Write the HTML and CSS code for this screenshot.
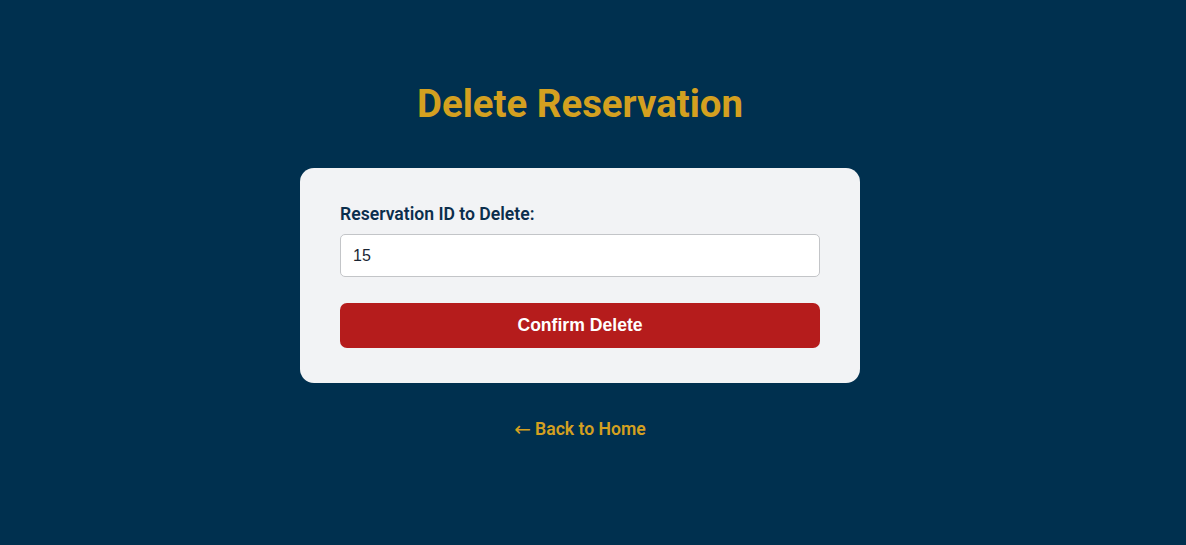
FILE: index.html
```html
<!DOCTYPE html>
<html lang="en">
<head>
<meta charset="utf-8">
<title>Delete Reservation</title>
<link rel="stylesheet" href="styles.css">
</head>
<body>
<main class="page">
  <h1 class="title">Delete Reservation</h1>
  <form class="card">
    <label class="label" for="rid">Reservation ID to Delete:</label>
    <input class="input" id="rid" type="text" value="15">
    <button class="btn" type="button">Confirm Delete</button>
  </form>
  <a class="back" href="#"><span class="arrow">←</span>Back to Home</a>
</main>
</body>
</html>
```

FILE: styles.css
```css
html, body {
  margin: 0;
  padding: 0;
  background: #00304f;
  height: 100%;
}
body {
  font-family: Roboto, "Liberation Sans", sans-serif;
}
.page {
  display: flex;
  flex-direction: column;
  align-items: center;
  padding-top: 82px;
  padding-right: 26px;
}
.title {
  margin: 0 0 42px;
  font-size: 38.4px;
  line-height: 44px;
  font-weight: 700;
  color: #d4a020;
}
.card {
  box-sizing: border-box;
  width: 560px;
  background: #f2f3f5;
  border-radius: 14px;
  padding: 36px 40px 35px;
  display: flex;
  flex-direction: column;
}
.label {
  display: block;
  font-size: 17.6px;
  line-height: 20px;
  font-weight: 600;
  color: #0b2e4c;
  margin-bottom: 10px;
}
.input {
  box-sizing: border-box;
  height: 43px;
  width: 100%;
  border: 1px solid #c3c5c8;
  border-radius: 5px;
  background: #fff;
  padding: 0 12px;
  font-family: "Liberation Sans", Arial, sans-serif;
  font-size: 16px;
  color: #1a2533;
  margin: 0 0 26px;
}
.btn {
  height: 45px;
  width: 100%;
  border: none;
  border-radius: 7px;
  background: #b51c1c;
  color: #fff;
  font-family: "Liberation Sans", Arial, sans-serif;
  font-weight: 700;
  font-size: 17.6px;
  margin: 0;
  padding: 0;
}
.back {
  margin-top: 36px;
  font-size: 17.6px;
  line-height: 20px;
  font-weight: 600;
  color: #d4a020;
  text-decoration: none;
  display: flex;
  align-items: center;
}
.arrow {
  font-family: "DejaVu Sans", sans-serif;
  font-weight: 400;
  font-size: 20px;
  margin-right: 4px;
}
```
